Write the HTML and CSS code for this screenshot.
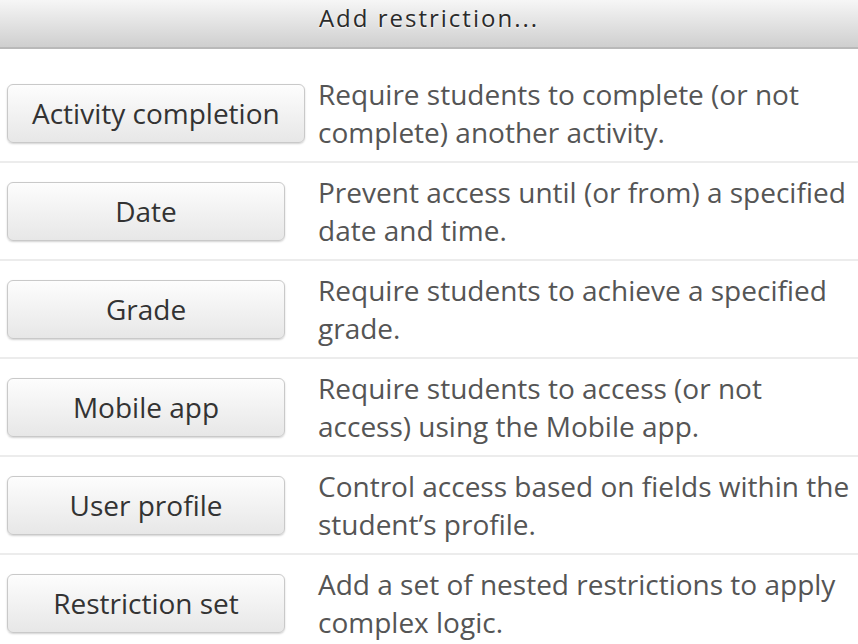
FILE: index.html
```html
<!DOCTYPE html>
<html lang="en">
<head>
    <meta charset="UTF-8">
    <meta name="viewport" content="width=device-width, initial-scale=1.0">
    <title>Add restriction</title>
    <link rel="stylesheet" href="styles.css">
</head>
<body>
    <div class="dialog">
        <div class="dialog-header">
            <h2>Add restriction...</h2>
        </div>

        <div class="restriction-list">
            <div class="restriction-row">
                <div class="button-cell"><button class="btn">Activity completion</button></div>
                <div class="description">Require students to complete (or not complete) another activity.</div>
            </div>
            <div class="restriction-row">
                <div class="button-cell"><button class="btn">Date</button></div>
                <div class="description">Prevent access until (or from) a specified date and time.</div>
            </div>
            <div class="restriction-row">
                <div class="button-cell"><button class="btn">Grade</button></div>
                <div class="description">Require students to achieve a specified grade.</div>
            </div>
            <div class="restriction-row">
                <div class="button-cell"><button class="btn">Mobile app</button></div>
                <div class="description">Require students to access (or not access) using the Mobile app.</div>
            </div>
            <div class="restriction-row">
                <div class="button-cell"><button class="btn">User profile</button></div>
                <div class="description">Control access based on fields within the student’s profile.</div>
            </div>
            <div class="restriction-row">
                <div class="button-cell"><button class="btn">Restriction set</button></div>
                <div class="description">Add a set of nested restrictions to apply complex logic.</div>
            </div>
        </div>
    </div>
</body>
</html>
```

FILE: styles.css
```css
body {
    margin: 0;
    padding: 0;
    background-color: #fff;
    font-family: "Open Sans", Arial, sans-serif;
    overflow: hidden;
}

.dialog-header {
    height: 47px;
    background: linear-gradient(to bottom, #f6f6f6, #cfcfcf);
    border-bottom: 2px solid #b9b9b9;
    text-align: center;
}

.dialog-header h2 {
    margin: 0;
    padding-top: 2px;
    font-size: 24px;
    line-height: 32px;
    font-weight: normal;
    letter-spacing: 2px;
    color: #2b2b2b;
    text-shadow: 0 1px 2px #fff;
}

.restriction-list {
    padding-top: 16px;
}

.restriction-row {
    display: flex;
    align-items: center;
    min-height: 96px;
    border-bottom: 2px solid #ececec;
}

.button-cell {
    width: 311px;
    flex-shrink: 0;
    padding-left: 7px;
}

.btn {
    min-width: 278px;
    height: 59px;
    padding: 0 24px;
    font-family: "Open Sans", Arial, sans-serif;
    font-size: 28px;
    color: #333;
    background: linear-gradient(to bottom, #fdfdfd, #e7e7e7);
    border: 1px solid #c9c9c9;
    border-radius: 6px;
    box-shadow: 0 1px 2px rgba(0, 0, 0, 0.18);
}

.description {
    flex: 1;
    padding-right: 6px;
    font-size: 28px;
    line-height: 38px;
    color: #555;
}
```
